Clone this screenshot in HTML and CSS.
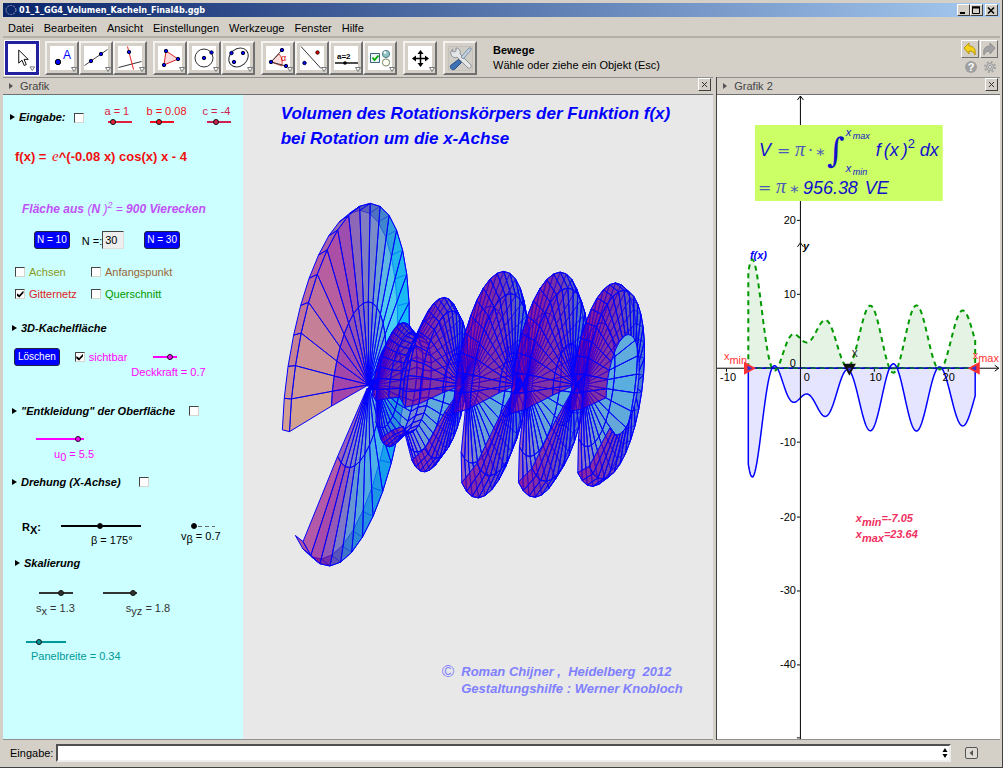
FILE: index.html
```html
<!DOCTYPE html>
<html lang="de">
<head>
    <meta charset="UTF-8">
    <meta name="viewport" content="width=device-width, initial-scale=1.0">
    <title>01_1_GG4_Volumen_Kacheln_Final4b.ggb</title>
    <link rel="stylesheet" href="styles.css">
</head>
<body>
    <div class="window">
        <header class="titlebar">
            <svg class="app-icon" width="12" height="12" viewBox="0 0 12 12"><ellipse cx="6" cy="6" rx="5" ry="4.5" fill="none" stroke="#8d97b8" stroke-dasharray="2 1"/></svg>
            <span class="title">01_1_GG4_Volumen_Kacheln_Final4b.ggb</span>
            <div class="win-buttons">
                <button type="button" aria-label="Minimieren"><svg width="10" height="9" viewBox="0 0 10 9"><path d="M2 7h5" stroke="#000" stroke-width="2"/></svg></button>
                <button type="button" aria-label="Maximieren"><svg width="10" height="9" viewBox="0 0 10 9"><path d="M1.500 1.500h7v6h-7zM1 1h8" fill="none" stroke="#000"/><path d="M1 1.500h8" stroke="#000" stroke-width="2"/></svg></button>
                <button type="button" class="win-close" aria-label="Schließen"><svg width="10" height="9" viewBox="0 0 10 9"><path d="M2 1.500l6 6M8 1.500l-6 6" stroke="#000" stroke-width="1.600"/></svg></button>
            </div>
        </header>

        <nav class="menubar">
            <a href="#">Datei</a>
            <a href="#">Bearbeiten</a>
            <a href="#">Ansicht</a>
            <a href="#">Einstellungen</a>
            <a href="#">Werkzeuge</a>
            <a href="#">Fenster</a>
            <a href="#">Hilfe</a>
        </nav>

        <div class="toolbar">
            <div class="tool-group">
                <button type="button" class="tool selected" aria-label="Bewege"><svg viewBox="0 0 30 30"><path d="M11.500 6.500v14l3.500-3.200 2.300 5.700 2.300-1-2.400-5.500h4.500z" fill="#fff" stroke="#000"/><path class="drop" d="M23.500 24.500h5l-2.500 4z"/></svg></button>
            </div>
            <div class="tool-group">
                <button type="button" class="tool" aria-label="Punkt"><svg viewBox="0 0 30 30"><path d="M3 3h24v24H3z" fill="#fff"/><circle cx="11" cy="19" r="2.700" fill="#00f" stroke="#000"/><text x="16" y="16" class="ic-a">A</text><path class="drop" d="M24.500 24.500h5l-2.500 4z"/></svg></button>
                <button type="button" class="tool" aria-label="Gerade"><svg viewBox="0 0 30 30"><path d="M3 3h24v24H3z" fill="#fff"/><path d="M3.500 22.500l23-16" stroke="#444"/><g fill="#00f" stroke="#003"><circle cx="10" cy="18" r="1.700"/><circle cx="20" cy="11" r="1.700"/></g><path class="drop" d="M24.500 24.500h5l-2.500 4z"/></svg></button>
                <button type="button" class="tool" aria-label="Senkrechte"><svg viewBox="0 0 30 30"><path d="M3 3h24v24H3z" fill="#fff"/><path d="M3.500 24.500l23-6" stroke="#333"/><path d="M12.500 3.500l6 23" stroke="#e22"/><circle cx="14" cy="9" r="1.700" fill="#00f" stroke="#003"/><path class="drop" d="M24.500 24.500h5l-2.500 4z"/></svg></button>
            </div>
            <div class="tool-group">
                <button type="button" class="tool" aria-label="Vieleck"><svg viewBox="0 0 30 30"><path d="M3 3h24v24H3z" fill="#fff"/><path d="M11 8l12 8-14 6z" fill="#fbdcdc" stroke="#d22"/><g fill="#00f" stroke="#003"><circle cx="11" cy="8" r="1.700"/><circle cx="23" cy="16" r="1.700"/><circle cx="9" cy="22" r="1.700"/></g><path class="drop" d="M24.500 24.500h5l-2.500 4z"/></svg></button>
                <button type="button" class="tool" aria-label="Kreis"><svg viewBox="0 0 30 30"><path d="M3 3h24v24H3z" fill="#fff"/><circle cx="15" cy="15" r="9" fill="none" stroke="#333"/><g fill="#00f" stroke="#003"><circle cx="15" cy="15" r="1.700"/><circle cx="22.500" cy="9.500" r="1.700"/></g><path class="drop" d="M24.500 24.500h5l-2.500 4z"/></svg></button>
                <button type="button" class="tool" aria-label="Ellipse"><svg viewBox="0 0 30 30"><path d="M3 3h24v24H3z" fill="#fff"/><ellipse cx="15.500" cy="14.500" rx="10.500" ry="8.500" transform="rotate(-40 15.500 14.500)" fill="none" stroke="#333"/><g fill="#00f" stroke="#003"><circle cx="8.500" cy="10" r="1.700"/><circle cx="20" cy="10" r="1.700"/><circle cx="11" cy="19" r="1.700"/></g><path class="drop" d="M24.500 24.500h5l-2.500 4z"/></svg></button>
            </div>
            <div class="tool-group">
                <button type="button" class="tool" aria-label="Winkel"><svg viewBox="0 0 30 30"><path d="M3 3h24v24H3z" fill="#fff"/><path d="M8 19l8-8q4 4 3 12z" fill="#fbdcdc" stroke="#d44"/><path d="M19 7L8 19l15 4" fill="none" stroke="#333"/><g fill="#00f" stroke="#003"><circle cx="19" cy="7" r="1.700"/><circle cx="8" cy="19" r="1.700"/><circle cx="23" cy="23" r="1.700"/></g><text x="18" y="18" class="ic-alpha">α</text><path class="drop" d="M24.500 24.500h5l-2.500 4z"/></svg></button>
                <button type="button" class="tool" aria-label="Spiegelung"><svg viewBox="0 0 30 30"><path d="M3 3h24v24H3z" fill="#fff"/><path d="M4 3.500l20 22" stroke="#333"/><circle cx="20.500" cy="9.500" r="1.700" fill="#d00" stroke="#300"/><circle cx="7.500" cy="20" r="1.700" fill="#00f" stroke="#003"/><path class="drop" d="M24.500 24.500h5l-2.500 4z"/></svg></button>
                <button type="button" class="tool" aria-label="Schieberegler"><svg viewBox="0 0 30 30"><path d="M3 3h24v24H3z" fill="#fff"/><text x="6" y="16" class="ic-eq">a=2</text><path d="M4 20h23" stroke="#000" stroke-width="1.400"/><circle cx="14" cy="20" r="1.800"/><path class="drop" d="M24.500 24.500h5l-2.500 4z"/></svg></button>
                <button type="button" class="tool" aria-label="Kontrollkästchen"><svg viewBox="0 0 30 30"><path d="M3 3h24v24H3z" fill="#fff"/><path d="M5.500 10.500h9v9h-9z" fill="#eef4f8" stroke="#3a6484"/><path d="M7.500 14.500l2 2.500 4-4.500" fill="none" stroke="#0a0" stroke-width="1.800"/><circle cx="21" cy="11" r="3.600" fill="#8fc4c4" stroke="#578"/><circle cx="20" cy="9.500" r="1.300" fill="#fff"/><circle cx="21" cy="19.500" r="3.600" fill="#fffff4" stroke="#786"/><path class="drop" d="M24.500 24.500h5l-2.500 4z"/></svg></button>
            </div>
            <div class="tool-group">
                <button type="button" class="tool" aria-label="Verschiebe"><svg viewBox="0 0 30 30"><path d="M3 3h24v24H3z" fill="#fff"/><path d="M8 15.500h14M15.500 9v14" stroke="#000" stroke-width="1.500"/><path d="M15.500 7l3 4h-6zM15.500 24l3-4h-6zM7 15.500l4-3v6zM24 15.500l-4-3v6z"/><path class="drop" d="M24.500 24.500h5l-2.500 4z"/></svg></button>
            </div>
            <div class="tool-group">
                <button type="button" class="tool" aria-label="Werkzeuge verwalten"><svg viewBox="0 0 30 30"><path d="M3.500 3.500h24v24h-24z" fill="#d0cdc6" stroke="#c4c1ba"/><path d="M8 6c-3 2-3 6 0 8 1 1 3 1 4 0l11 11c2 1 4-1 3-3L15 11c1-3-1-6-4-6v3l-2 1-2-1z" fill="#e4e6e8" stroke="#8c9298"/><path d="M26 5l-2 0-8 9 2 2 8-9z" fill="#c4d2e0" stroke="#7c93aa"/><path d="M13.500 16.500l3 3-7 7c-2 1-5-1-4-4z" fill="#3f72b4" stroke="#2c4f86"/></svg></button>
            </div>
            <div class="tool-help">
                <strong>Bewege</strong>
                <span>Wähle oder ziehe ein Objekt (Esc)</span>
            </div>
            <div class="tool-side">
                <button type="button" class="undo" aria-label="Rückgängig"><svg viewBox="0 0 16 16"><path d="M2 7l5-5v3c5 0 7 3 6 9-1-3-3-4-6-4v3z" fill="#f4d21c" stroke="#b8960a"/></svg></button>
                <button type="button" class="undo" aria-label="Wiederherstellen"><svg viewBox="0 0 16 16"><path d="M14 7L9 2v3C4 5 2 8 3 14c1-3 3-4 6-4v3z" fill="#a2a2a2" stroke="#909090"/></svg></button>
                <button type="button" class="flat" aria-label="Hilfe"><svg viewBox="0 0 16 16"><circle cx="8" cy="8" r="6" fill="#a0a0a0"/><text x="8" y="12" class="ic-help">?</text></svg></button>
                <button type="button" class="flat" aria-label="Optionen"><svg viewBox="0 0 16 16"><circle cx="8" cy="8" r="5" fill="none" stroke="#a4a4a4" stroke-width="2" stroke-dasharray="2 1.930"/><circle cx="8" cy="8" r="3.500" fill="#ccc" stroke="#999"/><circle cx="8" cy="8" r="1.500" fill="#eee" stroke="#999"/></svg></button>
            </div>
        </div>

        <main class="views">
            <section class="view view-main">
                <div class="view-head">
                    <span class="arrow"></span><span>Grafik</span>
                    <button type="button" aria-label="Grafik schließen"><svg width="7" height="7" viewBox="0 0 7 7"><path d="M1 1l5 5M6 1L1 6" stroke="#333"/></svg></button>
                </div>
                <div class="view-body">
                    <form class="panel">
                        <div class="row row-input">
                            <label class="head" for="showInput">Eingabe:</label>
                            <input type="checkbox" id="showInput">
                            <div class="slider slider-a">
                                <label for="a">a = 1</label>
                                <input type="range" id="a" class="w24" min="0" max="10" value="1">
                            </div>
                            <div class="slider slider-b">
                                <label for="b">b = 0.08</label>
                                <input type="range" id="b" class="w24" min="0" max="0.25" step="0.01" value="0.08">
                            </div>
                            <div class="slider slider-c">
                                <label for="c">c = -4</label>
                                <input type="range" id="c" class="w24" min="-6" max="0" value="-4">
                            </div>
                        </div>
                        <p class="row function">f(x) = <i>e</i>^(-0.08 x) cos(x) x - 4</p>
                        <p class="row tiles">Fläche aus <span class="thin">(</span>N<span class="thin"> )</span><sup>2</sup> <span class="thin">=</span> 900 Vierecken</p>
                        <div class="row row-n">
                            <button type="button" class="blue">N = 10</button>
                            <label for="n">N =:</label>
                            <input type="text" id="n" value="30">
                            <button type="button" class="blue n30">N = 30</button>
                        </div>
                        <div class="row row-checks">
                            <span class="check"><input type="checkbox" id="axes"><label for="axes" class="olive">Achsen</label></span>
                            <span class="check"><input type="checkbox" id="start"><label for="start" class="brown">Anfangspunkt</label></span>
                        </div>
                        <div class="row row-checks second">
                            <span class="check"><input type="checkbox" id="grid" checked><label for="grid" class="red">Gitternetz</label></span>
                            <span class="check"><input type="checkbox" id="cut"><label for="cut" class="green">Querschnitt</label></span>
                        </div>
                        <h3 class="row head row-surface">3D-Kachelfläche</h3>
                        <div class="row row-visible">
                            <button type="button" class="blue">Löschen</button>
                            <span class="check magenta"><input type="checkbox" id="visible" checked><label for="visible">sichtbar</label></span>
                            <div class="slider magenta opacity">
                                <input type="range" id="opacity" class="w24" min="0" max="0.9" step="0.1" value="0.7">
                                <label for="opacity">Deckkraft = 0.7</label>
                            </div>
                        </div>
                        <div class="row row-undress">
                            <label class="head" for="undress">"Entkleidung" der Oberfläche</label>
                            <input type="checkbox" id="undress">
                        </div>
                        <div class="row row-u magenta">
                            <div class="slider">
                                <input type="range" id="u0" class="w48" min="0" max="5.9" step="0.1" value="5.5">
                                <label for="u0">u<sub>0</sub> = 5.5</label>
                            </div>
                        </div>
                        <div class="row row-turn">
                            <label class="head" for="turn">Drehung (X-Achse)</label>
                            <input type="checkbox" id="turn">
                        </div>
                        <div class="row row-rx">
                            <b>R<sub>X</sub>:</b>
                            <div class="slider beta">
                                <input type="range" id="beta" class="w80" min="0" max="360" value="175">
                                <label for="beta">β = 175°</label>
                            </div>
                            <div class="slider speed">
                                <input type="range" id="vbeta" class="w24 dashed" min="0.7" max="2" step="0.1" value="0.7">
                                <label for="vbeta">v<sub>β</sub> = 0.7</label>
                            </div>
                        </div>
                        <h3 class="row head row-scale">Skalierung</h3>
                        <div class="row row-s">
                            <div class="slider sx">
                                <input type="range" id="sx" class="w34" min="0" max="1.9" step="0.1" value="1.3">
                                <label for="sx">s<sub>x</sub> = 1.3</label>
                            </div>
                            <div class="slider syz">
                                <input type="range" id="syz" class="w34" min="0" max="1.85" step="0.05" value="1.8">
                                <label for="syz">s<sub>yz</sub> = 1.8</label>
                            </div>
                        </div>
                        <div class="row row-width">
                            <div class="slider">
                                <input type="range" id="pw" class="w40" min="0.2" max="0.7" step="0.01" value="0.34">
                                <label for="pw">Panelbreite = 0.34</label>
                            </div>
                        </div>
                    </form>
                    <div class="stage">
                        <h1>Volumen des Rotationskörpers der Funktion f(x)<br>bei Rotation um die x-Achse</h1>
                        <svg id="surface" viewBox="243 155 471 506"></svg>
                        <p class="credits"><span class="copy">©</span><span>Roman Chijner ,&nbsp; Heidelberg&nbsp; 2012<br>Gestaltungshilfe : Werner Knobloch</span></p>
                    </div>
                </div>
            </section>

            <section class="view view-side">
                <div class="view-head">
                    <span class="arrow"></span><span>Grafik 2</span>
                    <button type="button" aria-label="Grafik 2 schließen"><svg width="7" height="7" viewBox="0 0 7 7"><path d="M1 1l5 5M6 1L1 6" stroke="#333"/></svg></button>
                </div>
                <div class="view-body">
                    <svg id="graph" viewBox="717 95 283 645">
                        <g id="curves"></g>
                        <g class="axes">
                            <path d="M717 368.500h282M995 365.500l4 3-4 3M800.500 96v644M797.500 100l3-4 3 4M797.500 247l3-4 3 4"/>
                            <path d="M797 220.500h3M797 294.500h3M797 442.500h3M797 517.500h3M797 591.500h3M797 665.500h3M797 738.500h3M726.500 369v3M874.500 369v3M948.500 369v3"/>
                        </g>
                        <path id="overAxis" d="M748 368.500H976"/>
                        <path id="overAxisDash" d="M748 368.500H976"/>
                        <g class="ticks">
                            <text x="796" y="224">20</text>
                            <text x="796" y="298">10</text>
                            <text x="796" y="367">0</text>
                            <text x="796" y="446">-10</text>
                            <text x="796" y="521">-20</text>
                            <text x="796" y="595">-30</text>
                            <text x="796" y="669">-40</text>
                            <text x="736" y="381">-10</text>
                            <text x="810" y="381">0</text>
                            <text x="882" y="381">10</text>
                            <text x="955" y="381">20</text>
                        </g>
                        <path d="M744 362v13l12-6.500z" fill="#f33"/>
                        <path d="M980 362v13l-12-6.500z" fill="#f33"/>
                        <path d="M843 364h13l-6.500 12z" fill="#111"/>
                        <path d="M747.500 366v5l5-2.500zM976.500 366v5l-5-2.500zM847.500 368h4l-2 4z" fill="#33c"/>
                        <g class="marks">
                            <text x="724" y="360">x<tspan dy="4">min</tspan></text>
                            <text x="973" y="359">x<tspan dy="3">max</tspan></text>
                        </g>
                        <text x="852" y="357" class="small-x">x</text>
                        <text x="803" y="250" class="label-y">y</text>
                        <text x="750" y="259" class="label-f">f(x)</text>
                        <g class="bounds">
                            <text x="856" y="522">x<tspan dy="4">min</tspan><tspan dy="-4">=-7.05</tspan></text>
                            <text x="856" y="538">x<tspan dy="4">max</tspan><tspan dy="-4">=23.64</tspan></text>
                        </g>
                        <path d="M755 125h188v76H755z" fill="#cf6"/>
                        <g class="formula">
                            <text x="759" y="156">V</text>
                            <text x="777" y="156" class="sym">=</text>
                            <text x="795" y="156" class="sym pi">π</text>
                            <text x="808" y="156" class="sym">·</text>
                            <text x="815" y="157" class="sym">∗</text>
                            <text x="827" y="162" class="int">∫</text>
                            <text x="846" y="136" class="lim">x</text><text x="853" y="139" class="sub">max</text>
                            <text x="846" y="172" class="lim">x</text><text x="853" y="175" class="sub">min</text>
                            <text x="876" y="156">f</text>
                            <text x="884" y="156">(x</text>
                            <text x="902" y="156">)</text>
                            <text x="908" y="148" class="lim up">2</text>
                            <text x="920" y="156">dx</text>
                            <text x="758" y="193" class="sym">=</text>
                            <text x="776" y="193" class="sym pi">π</text>
                            <text x="789" y="194" class="sym">∗</text>
                            <text x="803" y="194">956.38</text>
                            <text x="865" y="194">VE</text>
                        </g>
                    </svg>
                </div>
            </section>
        </main>

        <footer class="inputbar">
            <label for="cmd">Eingabe:</label>
            <div class="cmd-box">
                <input type="text" id="cmd">
                <svg width="6" height="10" viewBox="0 0 6 10"><path d="M3 0l2.500 4h-5zM3 10l2.500-4h-5z"/></svg>
            </div>
            <button type="button" class="flat" aria-label="Befehle"><svg width="13" height="12" viewBox="0 0 13 12"><rect x=".5" y=".5" width="12" height="11" rx="1.500" fill="#dedbd4" stroke="#555"/><path d="M8 3v6L4.500 6z" fill="#555"/></svg></button>
        </footer>
    </div>
    <script src="script.js"></script>
</body>
</html>
```
FILE: styles.css
```css
* {
    margin: 0;
    padding: 0;
    box-sizing: border-box;
}

body {
    background: #d4d0c8;
    font-family: "Liberation Sans", Arial, sans-serif;
    font-size: 11px;
    color: #000;
}

button, input {
    font: inherit;
}

button svg {
    display: block;
}

.window {
    display: flex;
    flex-direction: column;
    min-height: 100vh;
    padding: 3px 2px 1px 3px;
    border-right: 1px solid #404040;
    border-bottom: 1px solid #404040;
}

/* title bar */
.titlebar {
    display: flex;
    align-items: center;
    height: 14px;
    padding: 0 2px 0 2px;
    background: linear-gradient(to right, #0a246a, #a6caf0);
    color: #fff;
}

.title {
    margin-left: 2px;
    font-family: "DejaVu Sans Condensed", "DejaVu Sans", sans-serif;
    font-weight: bold;
    font-size: 9px;
}

.win-buttons {
    display: flex;
    margin-left: auto;
}

.win-buttons button {
    width: 13px;
    height: 12px;
    padding: 0;
    background: #d4d0c8;
    border: 1px solid;
    border-color: #fff #404040 #404040 #fff;
}

.win-buttons .win-close {
    margin-left: 2px;
}

/* menu */
.menubar {
    display: flex;
    gap: 10px;
    height: 21px;
    padding: 0 5px;
    line-height: 22px;
    border-bottom: 2px solid #b4b0a8;
}

.menubar a {
    color: #000;
    text-decoration: none;
}

/* toolbar */
.toolbar {
    display: flex;
    align-items: center;
    gap: 6px;
    height: 39px;
    padding: 0 2px 0 2px;
}

.tool-group {
    display: flex;
}

.tool {
    width: 34px;
    height: 34px;
    padding: 0;
    background: #d4d0c8;
    border: 2px solid;
    border-color: #f4f2ee #707070 #707070 #f4f2ee;
}

.tool.selected {
    background: #fff;
    border: 3px solid #2222a0;
    outline: 1px solid #fff;
}

.drop {
    fill: #fff;
    stroke: #777;
}

.ic-a {
    font-size: 12px;
    fill: #00f;
}

.ic-alpha {
    font-size: 9px;
    fill: #d00;
}

.ic-eq {
    font-size: 8px;
    font-weight: bold;
}

.ic-help {
    font-size: 11px;
    font-weight: bold;
    fill: #fff;
    text-anchor: middle;
}

.tool-help {
    display: flex;
    flex-direction: column;
    margin-left: 10px;
    line-height: 15px;
}

.tool-side {
    display: grid;
    grid-template-columns: 18px 18px;
    gap: 1px;
    margin-left: auto;
}

.undo {
    width: 18px;
    height: 18px;
    background: #d4d0c8;
    border: 1px solid;
    border-color: #fff #707070 #707070 #fff;
}

.flat {
    background: none;
    border: none;
}

.tool-side .flat {
    width: 16px;
    height: 16px;
    margin-left: 2px;
}

/* views */
.views {
    display: flex;
    flex: 1;
    gap: 3px;
}

.view {
    display: flex;
    flex-direction: column;
    min-width: 0;
}

.view-main {
    flex: 711;
}

.view-side {
    flex: 283;
    border-left: 1px solid #404040;
}

.view-head {
    display: flex;
    align-items: center;
    height: 18px;
    padding: 0 2px 0 6px;
    color: #444;
    border-top: 1px solid #909090;
    border-bottom: 1px solid #707070;
}

.view-head button {
    width: 13px;
    height: 13px;
    margin: 0 0 3px auto;
    padding: 2px;
    background: #d4d0c8;
    border: 1px solid;
    border-color: #fff #404040 #404040 #fff;
}

.arrow {
    margin-right: 7px;
    border: 3px solid transparent;
    border-left: 4px solid #555;
    border-right: none;
}

.view-body {
    display: flex;
    flex: 1;
    border-bottom: 1px solid #909090;
}

.view-main .view-body {
    background: #e8e8e8;
}

.view-side .view-body {
    background: #fff;
}

/* control panel */
.panel {
    flex: 0 0 33.75%;
    padding: 8px 0 0 7px;
    background: #cff;
    white-space: nowrap;
}

.row {
    display: flex;
    align-items: flex-start;
    line-height: 16px;
}

.head {
    display: flex;
    align-items: center;
    font-size: 11px;
    font-weight: bold;
    font-style: italic;
}

.head::before {
    content: "";
    margin-right: 4px;
    border: 3px solid transparent;
    border-left: 5px solid #000;
    border-right: none;
}

.panel input[type="checkbox"] {
    appearance: none;
    display: grid;
    place-items: center;
    width: 10px;
    height: 10px;
    background: #fff;
    border: 1px solid;
    border-color: #444 #d8d4cc #d8d4cc #444;
}

.panel input[type="checkbox"]:checked::before {
    content: "";
    width: 7px;
    height: 7px;
    background: #000;
    clip-path: polygon(0 35%, 40% 65%, 100% 0, 100% 35%, 40% 100%, 0 70%);
}

.panel input[type="range"] {
    appearance: none;
    height: 14px;
    background: linear-gradient(currentColor, currentColor) center / 100% 2px no-repeat;
    color: inherit;
}

.panel input[type="range"].dashed {
    background: repeating-linear-gradient(to right, #666 0 4px, transparent 4px 7px) center / 100% 1px no-repeat;
}

.panel input[type="range"]::-webkit-slider-thumb {
    appearance: none;
    width: 6px;
    height: 6px;
    border: 1px solid #111;
    border-radius: 50%;
    background: currentColor;
}

.panel .w24 { width: 24px; }
.panel .w34 { width: 34px; }
.panel .w40 { width: 40px; }
.panel .w48 { width: 48px; }
.panel .w80 { width: 80px; }

.slider {
    display: flex;
    flex-direction: column;
}

.slider sub, .row-rx sub {
    font-size: 11px;
    line-height: 0;
}

.check {
    display: flex;
    align-items: center;
    gap: 4px;
}

.magenta { color: #f0f; }
.olive { color: #8a9a1c; }
.brown { color: #963; }
.red { color: #e02020; }
.green { color: #090; }

.row-input input[type="checkbox"] { margin: 10px 0 0 9px; }
.row-input .head { padding-top: 6px; }
.row-input .slider input { height: 6px; margin-left: 4px; }
.slider-a { margin-left: 20px; color: #e0203c; }
.slider-b { margin-left: 14px; color: #f01020; }
.slider-c { margin-left: 16px; color: #d02050; }

.function {
    display: block;
    margin: 24px 0 0 5px;
    font-size: 13px;
    font-weight: bold;
    color: #f01010;
}

.function i {
    margin-left: 2px;
    font-family: "Liberation Serif", serif;
    font-size: 15px;
    font-weight: normal;
    line-height: 0;
}

.tiles {
    display: block;
    margin: 36px 0 0 12px;
    font-size: 12px;
    font-weight: bold;
    font-style: italic;
    color: #c050f8;
}

.tiles sup {
    font-size: 9px;
    font-weight: normal;
    line-height: 0;
}

.thin {
    font-weight: normal;
}

.blue {
    height: 18px;
    padding: 0 2px;
    background: #00f;
    border: 1px solid #224;
    border-radius: 3px;
    color: #fff;
    font-size: 10px;
}

.row-n {
    margin: 14px 0 0 24px;
}

.row-n label {
    margin: 2px 0 0 12px;
}

.row-n input {
    width: 22px;
    height: 18px;
    padding: 0 2px;
    background: #eee;
    border: 1px solid;
    border-color: #444 #ddd #ddd #444;
}

.n30 {
    margin-left: 20px;
}

.row-checks {
    display: grid;
    grid-template-columns: 76px 1fr;
    margin: 15px 0 0 5px;
}

.second {
    margin-top: 6px;
}

.row-surface {
    margin: 18px 0 0 2px;
    align-items: center;
}

.row-visible {
    margin: 12px 0 0 4px;
}

.row-visible .blue {
    padding: 0 3px;
}

.row-visible .check {
    margin: 1px 0 0 15px;
}

.row-visible .opacity {
    margin: 2px 0 0 4px;
}

.opacity input {
    margin-left: 22px;
}

.row-undress {
    align-items: center;
    margin: 23px 0 0 2px;
}

.row-undress input {
    margin-left: 14px;
}

.row-u {
    margin: 13px 0 0 26px;
}

.row-u label {
    margin-left: 18px;
}

.row-turn {
    align-items: center;
    margin: 12px 0 0 2px;
}

.row-turn input {
    margin-left: 18px;
}

.row-rx {
    margin: 29px 0 0 12px;
}

.beta {
    margin-left: 20px;
}

.beta label {
    margin-left: 30px;
    line-height: 14px;
}

.speed {
    margin-left: 40px;
}

.speed input {
    margin-left: 10px;
}

.speed label {
    line-height: 6px;
}

.row-scale {
    margin: 8px 0 0 5px;
    align-items: center;
}

.row-s {
    margin: 15px 0 0 26px;
    color: #333;
}

.sx input {
    margin-left: 3px;
}

.syz {
    margin-left: 28px;
}

.syz label {
    margin-left: 23px;
}

.row-width {
    margin: 19px 0 0 16px;
    color: #099;
}

.row-width label {
    margin-left: 5px;
    line-height: 14px;
}

/* 3D drawing */
.stage {
    display: flex;
    flex: 1;
    flex-direction: column;
    min-width: 0;
}

.stage h1 {
    padding: 6px 0 4px 38px;
    font-size: 17px;
    font-style: italic;
    line-height: 25px;
    color: #00f;
}

#surface {
    flex: 1;
    width: 100%;
    min-height: 0;
}

#surface polygon {
    stroke: #00f;
    stroke-width: 1;
    stroke-linejoin: round;
}

#surface .wire {
    fill: none;
    stroke-opacity: 0.25;
}

.credits {
    display: flex;
    gap: 7px;
    padding: 0 0 42px 199px;
    font-size: 13px;
    font-weight: bold;
    font-style: italic;
    line-height: 17px;
    color: #8080ff;
}

.copy {
    font-size: 17px;
    font-style: normal;
    font-weight: normal;
}

/* 2D graph */
#graph {
    flex: 1;
    min-width: 0;
    width: 100%;
}

.axes {
    fill: none;
    stroke: #000;
}

#overAxis {
    stroke: #00f;
}

#overAxisDash {
    stroke: #090;
    stroke-dasharray: 5 4;
}

.ticks {
    text-anchor: end;
}

.marks {
    fill: #f33;
}

.small-x {
    font-size: 12px;
    fill: #333;
}

.label-y, .label-f {
    font-weight: bold;
    font-style: italic;
}

.label-f {
    fill: #00f;
}

.bounds {
    font-weight: bold;
    font-style: italic;
    fill: #f03060;
}

.formula {
    font-size: 18px;
    font-style: italic;
    fill: #11c;
}

.formula .sym {
    font-family: "DejaVu Serif", serif;
    font-size: 16px;
    font-style: normal;
    fill: #4a58b8;
}

.formula .pi {
    font-family: "Liberation Serif", serif;
    font-size: 20px;
    font-style: italic;
}

.formula .int {
    font-family: "DejaVu Serif", serif;
    font-size: 34px;
    font-style: normal;
}

.formula .lim {
    font-size: 11px;
}

.formula .up {
    font-size: 13px;
    font-style: normal;
}

.formula .sub {
    font-size: 9px;
}

.curve-f {
    fill: #e5e5ff;
    stroke: #00f;
    stroke-width: 1.5;
}

.curve-neg {
    fill: #e5f3e5;
    stroke: #090;
    stroke-width: 2;
    stroke-dasharray: 5 4;
}

/* input bar */
.inputbar {
    display: flex;
    align-items: center;
    height: 26px;
    padding: 0 22px 0 7px;
}

.cmd-box {
    position: relative;
    display: flex;
    flex: 1;
    margin: 0 14px 0 3px;
}

.cmd-box input {
    flex: 1;
    height: 18px;
    padding: 0 12px 0 3px;
    background: #fff;
    border: 2px solid;
    border-color: #505050 #eee #eee #505050;
}

.cmd-box svg {
    position: absolute;
    right: 3px;
    top: 4px;
}
```
FILE: script.js
```javascript
var xmin = -7.05, xmax = 23.64, N = 30, u0 = 5.5;

function f(x) {
    return Math.exp(-0.08 * x) * Math.cos(x) * x - 4;
}

function add(parent, name, attrs) {
    var el = document.createElementNS("http://www.w3.org/2000/svg", name);
    for (var key in attrs) {
        el.setAttribute(key, attrs[key]);
    }
    parent.appendChild(el);
}

// function graph and its mirror image
function drawCurves() {
    var g = document.getElementById("curves");
    [[-1, "curve-neg"], [1, "curve-f"]].forEach(function (c) {
        var d = "M" + (800.5 + 7.4 * xmin) + " 368.5";
        for (var i = 0; i <= 400; i++) {
            var x = xmin + (xmax - xmin) * i / 400;
            d += "L" + (800.5 + 7.4 * x).toFixed(2) + " " + (368.5 - 7.42 * c[0] * f(x)).toFixed(2);
        }
        d += "L" + (800.5 + 7.4 * xmax) + " 368.5Z";
        add(g, "path", { d: d, "class": c[1] });
    });
}

// colour stops: angle in degrees, r, g, b
var rim = [[-105, 205, 138, 108], [-75, 180, 80, 115], [-45, 160, 30, 130], [-10, 70, 70, 170],
    [35, 0, 120, 220], [90, 0, 150, 250], [150, 10, 100, 210], [180, 90, 20, 150], [211, 160, 20, 130]];
var outer = [[-105, 205, 138, 108], [-75, 190, 100, 115], [-45, 160, 30, 130], [-30, 135, 0, 145],
    [-10, 90, 70, 170], [10, 70, 110, 190], [35, 20, 190, 240], [70, 0, 200, 255],
    [120, 0, 160, 240], [160, 36, 130, 208], [175, 86, 65, 180], [190, 130, 0, 150], [211, 165, 43, 136]];
var falling = [[-105, 145, 0, 140], [-60, 140, 0, 142], [-20, 120, 15, 155], [10, 90, 60, 175],
    [40, 60, 100, 200], [90, 60, 115, 210], [130, 75, 90, 200], [165, 105, 40, 175],
    [190, 125, 10, 155], [211, 145, 10, 145]];
var rising = [[-105, 135, 0, 143], [-60, 128, 5, 145], [-30, 105, 25, 158], [0, 75, 75, 178],
    [35, 50, 145, 210], [90, 30, 150, 220], [150, 58, 130, 200], [175, 85, 90, 185],
    [195, 100, 65, 178], [211, 125, 20, 158]];

function ramp(stops, t) {
    for (var i = 1; i < stops.length - 1 && t > stops[i][0]; i++) {}
    var a = stops[i - 1], b = stops[i], k = (t - a[0]) / (b[0] - a[0]);
    return "rgb(" + [1, 2, 3].map(function (n) {
        return Math.round(a[n] + (b[n] - a[n]) * k);
    }).join(",") + ")";
}

function stopsFor(i, x, dx) {
    if (i === 0) return rim;
    if (i === 1) return outer;
    if (i === 2) return rising;
    return f(x + dx) < f(x) ? rising : falling;
}

function project(x, t) {
    var r = -f(x), a = t * Math.PI / 180;
    return {
        x: 405 + 9.22 * x + r * (1.55 * Math.cos(a) + 4.2 * Math.sin(a)),
        y: 383.5 - r * 13.5 * Math.cos(a),
        depth: 1.7 * r * Math.sin(a) - 0.4 * x
    };
}

function drawSurface() {
    var svg = document.getElementById("surface"), tiles = [];
    var dt = u0 * 180 / Math.PI / N, dx = (xmax - xmin) / N;
    for (var i = 0; i < N; i++) {
        for (var j = 0; j < N; j++) {
            var x = xmin + i * dx, t = -105 + j * dt;
            var p = [project(x, t), project(x + dx, t), project(x + dx, t + dt), project(x, t + dt)];
            tiles.push({
                points: p.map(function (q) { return q.x.toFixed(1) + "," + q.y.toFixed(1); }).join(" "),
                depth: (p[0].depth + p[1].depth + p[2].depth + p[3].depth) / 4,
                fill: ramp(stopsFor(i, x, dx), t + dt / 2),
                hidden: i > 2
            });
        }
    }
    // far tiles first
    tiles.sort(function (a, b) { return b.depth - a.depth; });
    tiles.forEach(function (tile) {
        add(svg, "polygon", { points: tile.points, fill: tile.fill, "fill-opacity": 0.7 });
    });
    // edges of the covered tiles shine through
    tiles.forEach(function (tile) {
        if (tile.hidden) {
            add(svg, "polygon", { points: tile.points, "class": "wire" });
        }
    });
}

drawCurves();
drawSurface();
```
